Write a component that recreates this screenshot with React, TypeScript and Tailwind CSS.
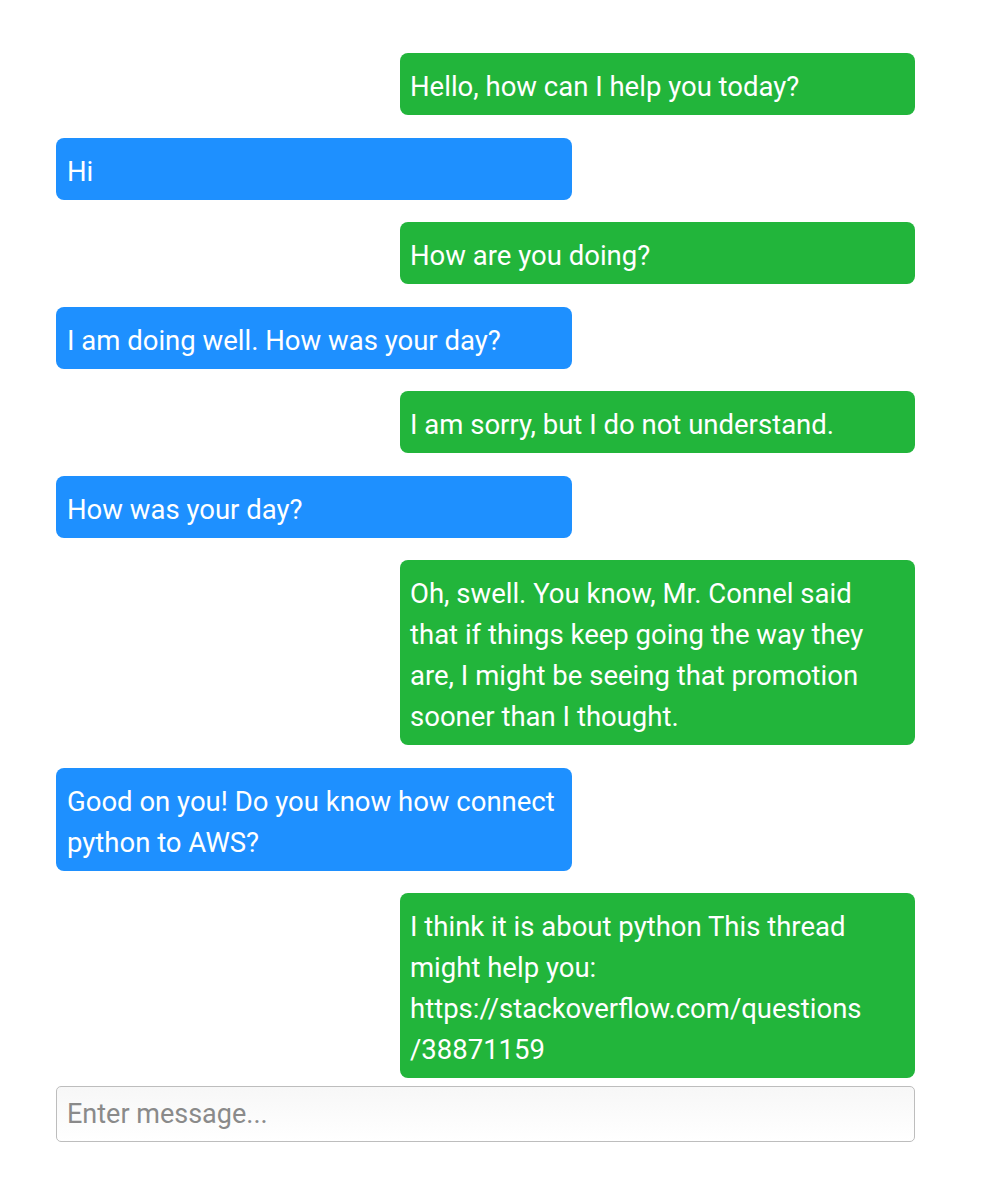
import React from 'react';

type Message = {
  from: 'bot' | 'user';
  text: string;
};

const messages: Message[] = [
  { from: 'bot', text: 'Hello, how can I help you today?' },
  { from: 'user', text: 'Hi' },
  { from: 'bot', text: 'How are you doing?' },
  { from: 'user', text: 'I am doing well. How was your day?' },
  { from: 'bot', text: 'I am sorry, but I do not understand.' },
  { from: 'user', text: 'How was your day?' },
  {
    from: 'bot',
    text: 'Oh, swell. You know, Mr. Connel said that if things keep going the way they are, I might be seeing that promotion sooner than I thought.',
  },
  { from: 'user', text: 'Good on you! Do you know how connect python to AWS?' },
  {
    from: 'bot',
    text: 'I think it is about python This thread might help you: https://stackoverflow.com/questions\u200B/38871159',
  },
];

export default function App() {
  return (
    <div className="min-h-[1184px] bg-white font-['Roboto',sans-serif]">
      <div className="ml-[56px] w-[859px] pt-[53px]">
        {/* Messages */}
        <div className="flex flex-col gap-[22.5px]">
          {messages.map((m, i) => (
            <div
              key={i}
              className={
                m.from === 'bot'
                  ? 'w-[515px] self-end rounded-[8px] bg-[#22b53b] px-[10px] pt-[13px] pb-[8px] text-[27.5px] leading-[41px] text-white break-words'
                  : 'w-[516px] self-start rounded-[8px] bg-[#1e90ff] px-[11px] pt-[13px] pb-[8px] text-[27.5px] leading-[41px] text-white break-words'
              }
            >
              {m.text}
            </div>
          ))}
        </div>

        {/* Input */}
        <input
          type="text"
          placeholder="Enter message..."
          className="mt-[8px] block h-[56px] w-[859px] rounded-[5px] border border-[#bdbdbd] bg-gradient-to-b from-[#f7f7f7] to-white px-[10px] text-[27px] text-[#333] placeholder:text-[#8a8a8a] outline-none"
        />
      </div>
    </div>
  );
}
